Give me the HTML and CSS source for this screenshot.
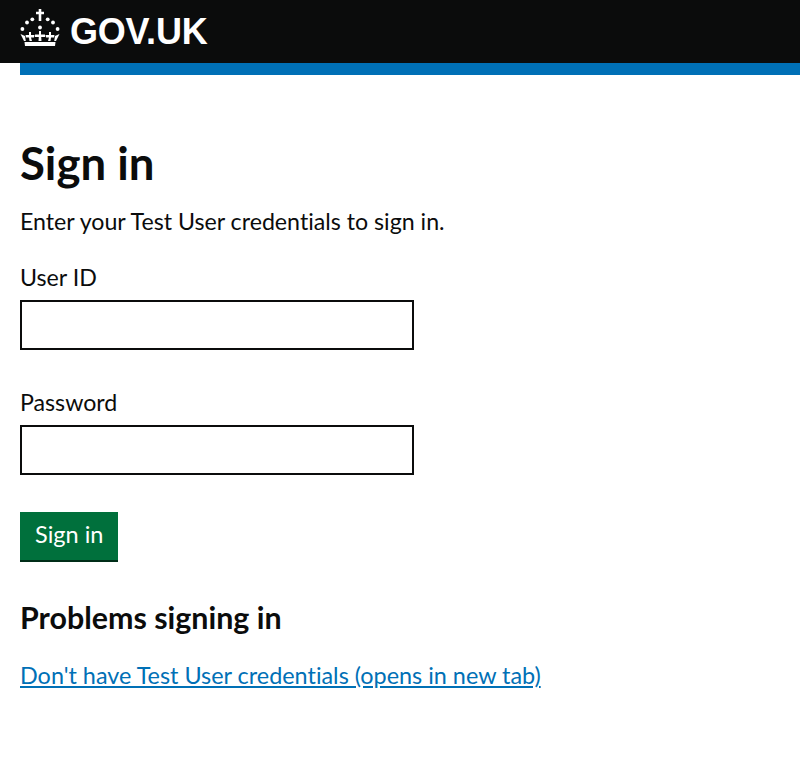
FILE: index.html
```html
<!DOCTYPE html>
<html lang="en">
<head>
    <meta charset="UTF-8">
    <title>Sign in - GOV.UK</title>
    <link rel="stylesheet" href="styles.css">
</head>
<body>
    <header class="header">
        <a class="logo" href="#">
            <svg class="crown" viewBox="0 0 40 37" width="40" height="37" aria-hidden="true">
                <g fill="#fff">
                    <!-- cross -->
                    <path d="M18.700 0h2.600v2.700H24v2.600h-2.700V12h-2.600V5.300H16V2.700h2.700z"/>
                    <!-- dots -->
                    <circle cx="20" cy="18.500" r="1.900"/>
                    <circle cx="12.300" cy="10.300" r="1.900"/>
                    <circle cx="27.700" cy="10.300" r="1.900"/>
                    <circle cx="7" cy="13.500" r="1.900"/>
                    <circle cx="33" cy="13.500" r="1.900"/>
                    <circle cx="2.400" cy="20" r="1.900"/>
                    <circle cx="37.600" cy="20" r="1.900"/>
                    <!-- crown -->
                    <path d="M19 22h2v3.500h4V28h-3.800l.3 4h-3l.3-4H15v-2.500h4z"/>
                    <path d="M9 23h2v3h3.500L14 28.500h-3l1 3.500H9.500L9 28.500H6L5.500 26H9z"/>
                    <path d="M29 23h2v3h3.500L34 28.500h-3l-.5 3.500H28l1-3.500h-3l-.5-2.500H29z"/>
                    <path d="M.5 25l4.500 2 .8 5H4z"/>
                    <path d="M39.500 25L35 27l-.8 5H36z"/>
                    <path d="M4.500 33h31L35 37H5z"/>
                </g>
            </svg>
            <span class="logo-text">GOV.UK</span>
        </a>
    </header>
    <div class="blue-bar"></div>

    <main class="main">
        <h1>Sign in</h1>
        <p class="intro">Enter your Test User credentials to sign in.</p>

        <form class="form" onsubmit="return false">
            <div class="form-group">
                <label for="user-id">User ID</label>
                <input type="text" id="user-id">
            </div>
            <div class="form-group">
                <label for="password">Password</label>
                <input type="password" id="password">
            </div>
            <button type="submit">Sign in</button>
        </form>

        <h2>Problems signing in</h2>
        <a class="link" href="#">Don't have Test User credentials (opens in new tab)</a>
    </main>
</body>
</html>
```
FILE: styles.css
```css
body {
    margin: 0;
    font-family: "Lato", "Liberation Sans", sans-serif;
    font-variant-ligatures: none;
    color: #0b0c0c;
    background-color: #fff;
}

.header {
    background-color: #0b0c0c;
    height: 63px;
    padding: 0 20px;
    display: flex;
    align-items: center;
}

.logo {
    display: flex;
    align-items: center;
    gap: 10px;
    color: #fff;
    text-decoration: none;
}

.crown {
    margin-bottom: 8px;
}

.logo-text {
    font-family: "Liberation Sans", sans-serif;
    font-size: 36px;
    font-weight: 700;
    letter-spacing: -0.2px;
}

.blue-bar {
    height: 12px;
    margin-left: 20px;
    background-color: #0070b6;
}

.main {
    padding: 60px 20px 0;
}

h1 {
    margin: 0 0 15px;
    font-size: 45.500px;
    line-height: 56px;
    font-weight: 700;
}

.intro {
    margin: 0 0 26px;
    font-size: 23.200px;
    line-height: 30px;
}

.form-group {
    margin-bottom: 37px;
}

label {
    display: block;
    margin-bottom: 8px;
    font-size: 23.200px;
    line-height: 30px;
}

input {
    display: block;
    width: 394px;
    height: 50px;
    box-sizing: border-box;
    border: 2px solid #0b0c0c;
    padding: 5px;
    font-size: 19px;
}

button {
    display: block;
    height: 48px;
    padding: 0 15px 4px;
    border: none;
    box-shadow: 0 2px 0 #002d18;
    background-color: #00703c;
    color: #fff;
    font-family: inherit;
    font-size: 23.500px;
    cursor: pointer;
}

h2 {
    margin: 40px 0 25px;
    font-size: 30.400px;
    line-height: 35px;
    font-weight: 700;
}

.link {
    color: #0070b6;
    font-size: 23.400px;
    line-height: 30px;
}
```
